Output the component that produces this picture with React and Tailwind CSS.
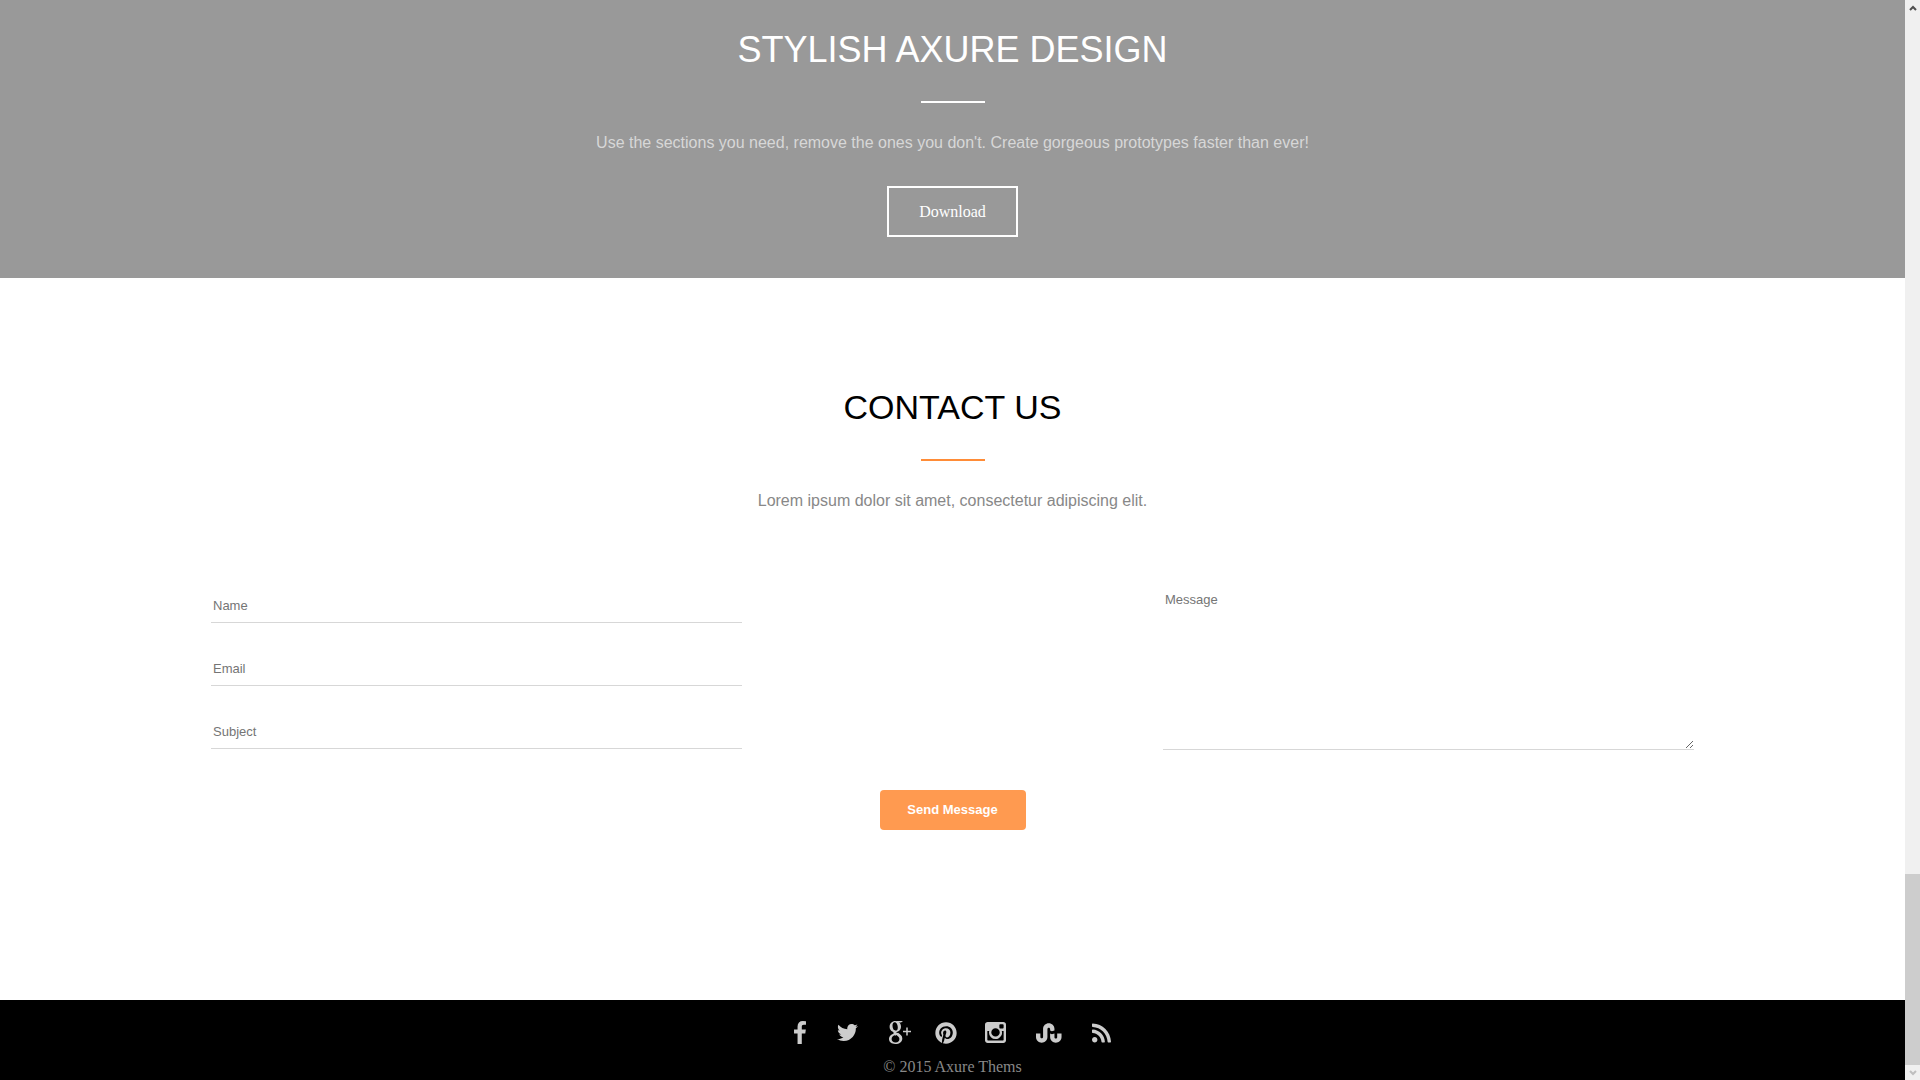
import React, { useState } from 'react'
import { FaPinterest, FaRss, FaStumbleupon, FaTwitter } from 'react-icons/fa';

function FacebookIcon({ className }) {
  return (
    <svg viewBox="479 0 864 1664" fill="currentColor" className={className}>
      <path d="M1343 12v264h-157q-86 0-116 36t-30 108v189h293l-39 296h-254v759h-306v-759h-255v-296h255v-218q0-186 104-288.500t277-102.500q147 0 228 12z" />
    </svg>
  )
}

function GooglePlusIcon({ className }) {
  return (
    <svg viewBox="0 0 22 23" fill="none" stroke="currentColor" className={className}>
      <path d="M6.500 0h7.500l-2 1.500H9z" fill="currentColor" stroke="none" />
      <path
        fillRule="evenodd"
        fill="currentColor"
        stroke="none"
        d="M6.500 0C3 0 .6 2.600.6 5.700s2.300 5.500 5.400 5.500c3.600 0 6-2.500 6-5.500C12 2.800 10 0 6.500 0zM5.600 1.200c1.900 0 3.200 2.600 3.200 5.200 0 2.100-.9 3.300-2.200 3.300-1.900 0-3.100-2.500-3.100-5 0-2.100.8-3.500 2.100-3.500z"
      />
      <path d="M6.800 10.300c-1.600 1.200-1 2.300.5 3.300" strokeWidth="3" />
      <path
        fillRule="evenodd"
        fill="currentColor"
        stroke="none"
        d="M6.500 12.500C2.600 12.600 0 14.900 0 18.100 0 21.200 2.600 23 6.200 23c4.300 0 7.100-2.300 7.100-5.600 0-2.700-1.900-3.900-4.300-5.600zM7.300 14.100c2.100 1.400 3.100 2.300 3.100 4 0 2.100-1.400 3.400-3.800 3.400-2.400 0-4-1.500-4-3.500s1.700-3.800 4.700-3.900z"
      />
      <path d="M18 6.500v8M14 10.500h8" strokeWidth="1.500" />
    </svg>
  )
}

function InstagramIcon({ className }) {
  return (
    <svg viewBox="128 128 1536 1536" fill="currentColor" className={className}>
      <path d="M1490 1426v-648h-135q20 63 20 131 0 126-64 232.500t-174 168.500-240 62q-197 0-337-135.500t-140-327.500q0-68 20-131h-141v648q0 26 17.500 43.500t43.500 17.500h1069q25 0 43-17.500t18-43.500zm-284-533q0-124-90.500-211.500t-218.500-87.500q-127 0-217.500 87.500t-90.500 211.500 90.500 211.500 217.500 87.500q128 0 218.500-87.500t90.500-211.500zm284-360v-165q0-28-20-48.500t-49-20.500h-174q-29 0-49 20.500t-20 48.500v165q0 29 20 49t49 20h174q29 0 49-20t20-49zm174-208v1142q0 81-58 139t-139 58h-1142q-81 0-139-58t-58-139v-1142q0-81 58-139t139-58h1142q81 0 139 58t58 139z" />
    </svg>
  )
}

const socialLinks = [
  { label: 'Facebook', Icon: FacebookIcon, link: 'mr-[31px]', size: 'w-3 h-[23px]' },
  { label: 'Twitter', Icon: FaTwitter, link: 'mr-[31px]', size: 'w-[21px] h-[21px]' },
  { label: 'Google Plus', Icon: GooglePlusIcon, link: 'mr-6', size: 'w-[22px] h-[23px]' },
  { label: 'Pinterest', Icon: FaPinterest, link: 'mr-7', size: 'w-[22px] h-[22px]' },
  { label: 'Instagram', Icon: InstagramIcon, link: 'mr-[30px]', size: 'w-[21px] h-[21px]' },
  { label: 'StumbleUpon', Icon: FaStumbleupon, link: 'mr-[30px]', size: 'w-[26px] h-[26px]' },
  { label: 'RSS', Icon: FaRss, link: '', size: 'w-[19px] h-[22px]' },
];

const fields = [
  { id: 'name', label: 'Name', type: 'text' },
  { id: 'email', label: 'Email', type: 'email' },
  { id: 'subject', label: 'Subject', type: 'text' },
];

function ScrollBar() {
  return (
    <aside className="sticky top-0 flex h-screen w-[15px] shrink-0 flex-col bg-[#f0f0f0]">
      <div className="flex h-[15px] items-center justify-center text-[#505050]">
        <svg viewBox="0 0 8 6" className="h-[6px] w-2" fill="none" stroke="currentColor" strokeWidth="2">
          <path d="M1 5l3-3 3 3" />
        </svg>
      </div>
      <div className="flex-1" />
      <div className="h-[191px] bg-[#cdcdcd]" />
      <div className="flex h-[15px] items-center justify-center text-[#bfbfbf]">
        <svg viewBox="0 0 8 6" className="h-[6px] w-2" fill="none" stroke="currentColor" strokeWidth="2">
          <path d="M1 1l3 3 3-3" />
        </svg>
      </div>
    </aside>
  )
}

export default function App() {
  const [form, setForm] = useState({ name: '', email: '', subject: '', message: '' });

  const handleChange = (e) => {
    setForm((prev) => ({ ...prev, [e.target.name]: e.target.value }));
  };

  return (
    <div className="flex min-h-screen bg-white font-['Liberation_Sans',Arial,sans-serif]">
      <div className="min-w-0 flex-1">
        {/* Banner */}
        <section className="flex flex-col items-center bg-[#999999] pt-[30px] pb-[41px] text-center">
          <h2 className="text-4xl leading-10 text-white">STYLISH AXURE DESIGN</h2>
          <div className="mt-[31px] h-0.5 w-16 bg-white" />
          <p className="mt-7 text-base leading-6 text-[#d7d7d7]">
            Use the sections you need, remove the ones you don't. Create gorgeous prototypes faster than ever!
          </p>
          <button
            type="button"
            className="mt-[31px] h-[51px] w-[131px] cursor-pointer border-2 border-white font-['Liberation_Serif',serif] text-base text-white"
          >
            Download
          </button>
        </section>

        {/* Contact */}
        <section className="flex flex-col items-center pt-[109px] pb-[170px]">
          <h2 className="text-[34px] leading-10 text-black">CONTACT US</h2>
          <div className="mt-8 h-0.5 w-16 bg-[#ff8c37]" />
          <p className="mt-7 text-base leading-6 text-[#888888]">
            Lorem ipsum dolor sit amet, consectetur adipiscing elit.
          </p>
          <form
            onSubmit={(e) => e.preventDefault()}
            className="mt-[76px] flex w-full flex-col items-center gap-10 px-[211px]"
          >
            <div className="grid w-full grid-cols-2 gap-[421px]">
              <div className="flex flex-col gap-[29px]">
                {fields.map(({ id, label, type }) => (
                  <input
                    key={id}
                    id={id}
                    name={id}
                    type={type}
                    aria-label={label}
                    placeholder={label}
                    value={form[id]}
                    onChange={handleChange}
                    className="h-[34px] w-full border-b border-[#d7d7d7] px-0.5 text-[13px] text-black outline-none placeholder:text-[#757575]"
                  />
                ))}
              </div>
              <textarea
                id="message"
                name="message"
                aria-label="Message"
                placeholder="Message"
                value={form.message}
                onChange={handleChange}
                className="block h-[161px] w-full resize border-b border-[#d7d7d7] px-0.5 pt-[3px] text-[13px] leading-4 text-black outline-none placeholder:text-[#757575]"
              />
            </div>
            <button
              type="submit"
              className="h-10 w-[146px] cursor-pointer rounded bg-[#ff9a50] text-[13px] font-bold text-white"
            >
              Send Message
            </button>
          </form>
        </section>

        {/* Footer */}
        <footer className="flex flex-col items-center bg-black pt-[21px] pb-px font-['Liberation_Serif',serif]">
          <div className="flex h-[23px] items-center text-[#cccccc]">
            {socialLinks.map(({ label, Icon, link, size }) => (
              <a key={label} href="#" aria-label={label} className={link}>
                <Icon className={size} />
              </a>
            ))}
          </div>
          <p className="mt-[11px] text-base leading-6 text-[#888888]">© 2015 Axure Thems</p>
        </footer>
      </div>
      <ScrollBar />
    </div>
  )
}
